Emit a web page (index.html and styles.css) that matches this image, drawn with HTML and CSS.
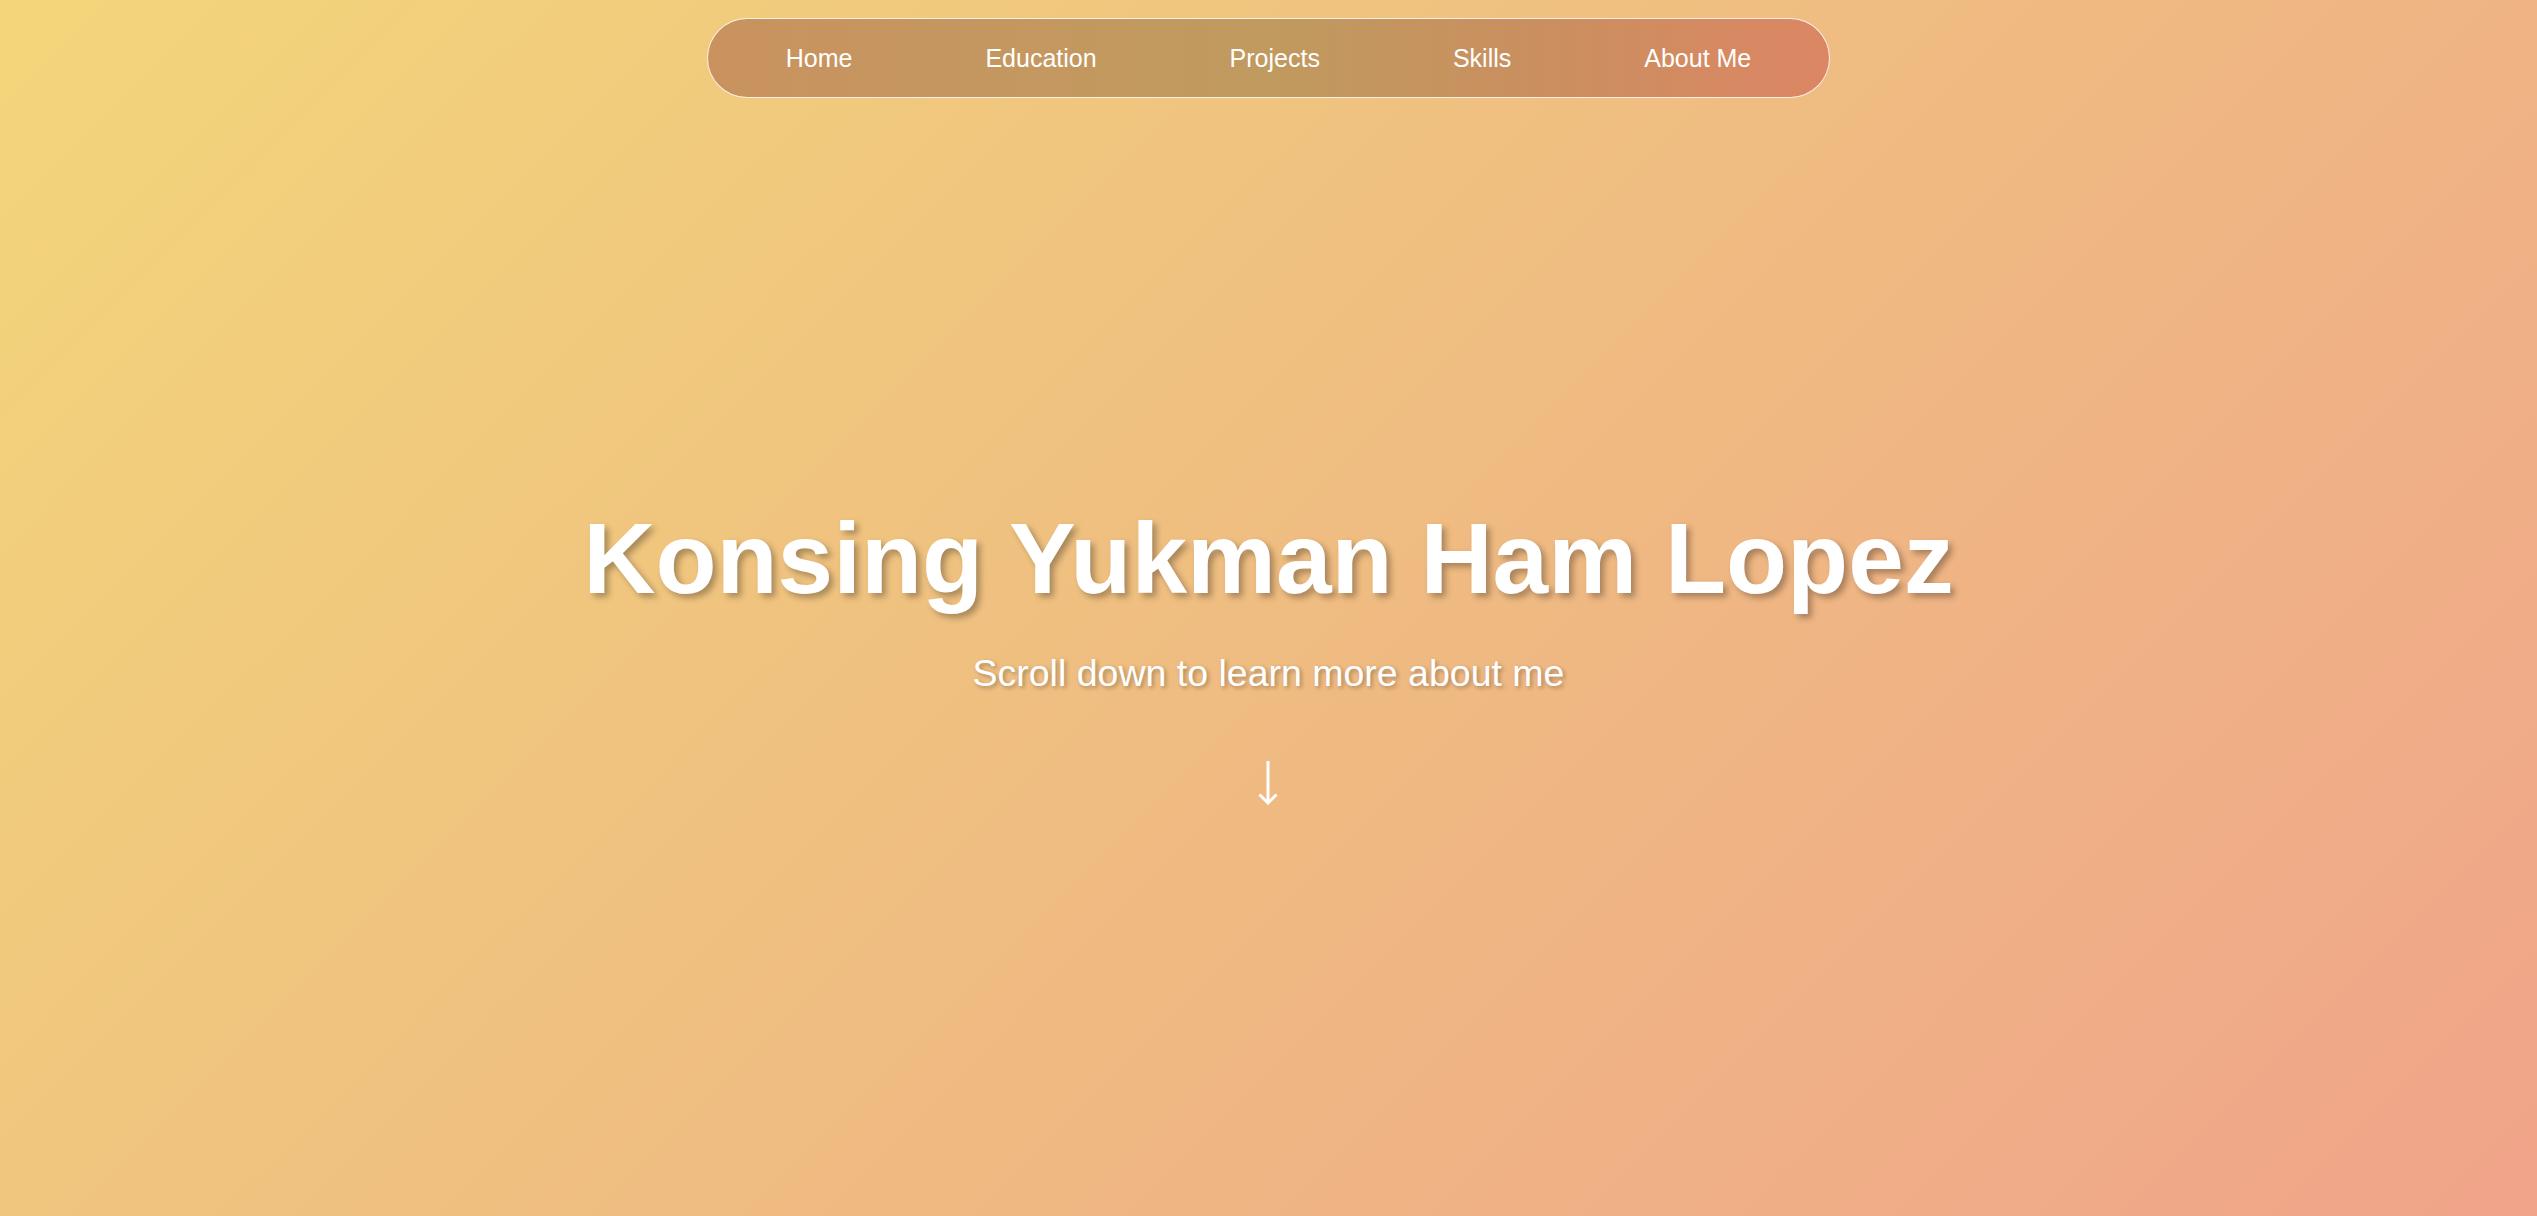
FILE: index.html
```html
<!DOCTYPE html>
<html lang="en">
<head>
<meta charset="utf-8">
<title>Konsing Yukman Ham Lopez</title>
<link rel="stylesheet" href="styles.css">
</head>
<body>
<div class="page">
  <nav class="nav">
    <a class="nav-link" href="#home">Home</a>
    <a class="nav-link" href="#education">Education</a>
    <a class="nav-link" href="#projects">Projects</a>
    <a class="nav-link" href="#skills">Skills</a>
    <a class="nav-link" href="#about">About Me</a>
  </nav>
  <section class="hero" id="home">
    <h1 class="hero-title">Konsing Yukman Ham Lopez</h1>
    <p class="hero-sub">Scroll down to learn more about me</p>
    <svg class="hero-arrow" width="24" height="44" viewBox="0 0 24 44" aria-label="scroll down">
      <line x1="12" y1="0" x2="12" y2="42" stroke="#ffffff" stroke-width="3"/>
      <polyline points="3.5,33.5 12,42 20.5,33.5" fill="none" stroke="#ffffff" stroke-width="3" stroke-linejoin="miter"/>
    </svg>
  </section>
</div>
</body>
</html>
```

FILE: styles.css
```css
html, body {
  margin: 0;
  padding: 0;
  height: 100%;
}

body {
  font-family: "Liberation Sans", Arial, sans-serif;
  color: #ffffff;
  background: linear-gradient(135deg, #f3d67a 0%, #efbf80 45%, #f0a48a 100%);
  overflow: hidden;
}

.page {
  min-height: 100vh;
  display: flex;
  flex-direction: column;
  align-items: center;
}

.nav {
  margin-top: 18px;
  height: 80px;
  box-sizing: border-box;
  display: flex;
  align-items: center;
  gap: 133px;
  padding: 0 78px;
  border: 1.5px solid rgba(255, 255, 255, 0.85);
  border-radius: 40px;
  background: linear-gradient(90deg, #c9925f 0%, #c49860 30%, #c09a5f 50%, #c9905f 72%, #dc8664 100%);
}

.nav-link {
  color: #ffffff;
  text-decoration: none;
  font-size: 25px;
  line-height: 1;
}

.hero {
  flex: 1;
  display: flex;
  flex-direction: column;
  align-items: center;
  justify-content: center;
  text-align: center;
  padding-bottom: 8px;
}

.hero-title {
  margin: 0;
  font-size: 100px;
  font-weight: 700;
  line-height: 115px;
  text-shadow: 4px 4px 6px rgba(0, 0, 0, 0.3);
}

.hero-sub {
  margin: 36px 0 0;
  font-size: 37.5px;
  line-height: 43px;
  text-shadow: 2px 2px 4px rgba(0, 0, 0, 0.3);
}

.hero-arrow {
  display: block;
  margin-top: 66px;
}
```
